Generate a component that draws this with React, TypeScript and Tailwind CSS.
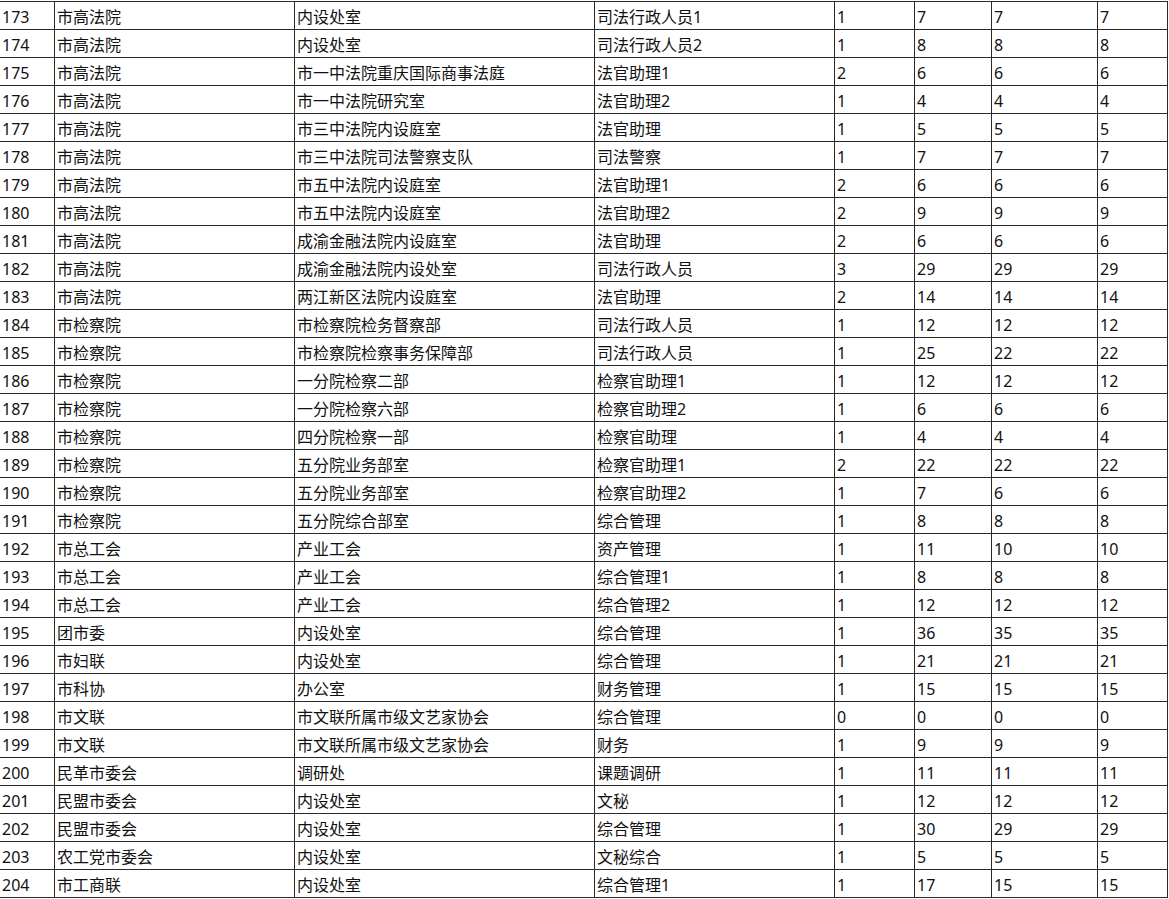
const rows: string[][] = [
  ['173', '市高法院', '内设处室', '司法行政人员1', '1', '7', '7', '7'],
  ['174', '市高法院', '内设处室', '司法行政人员2', '1', '8', '8', '8'],
  ['175', '市高法院', '市一中法院重庆国际商事法庭', '法官助理1', '2', '6', '6', '6'],
  ['176', '市高法院', '市一中法院研究室', '法官助理2', '1', '4', '4', '4'],
  ['177', '市高法院', '市三中法院内设庭室', '法官助理', '1', '5', '5', '5'],
  ['178', '市高法院', '市三中法院司法警察支队', '司法警察', '1', '7', '7', '7'],
  ['179', '市高法院', '市五中法院内设庭室', '法官助理1', '2', '6', '6', '6'],
  ['180', '市高法院', '市五中法院内设庭室', '法官助理2', '2', '9', '9', '9'],
  ['181', '市高法院', '成渝金融法院内设庭室', '法官助理', '2', '6', '6', '6'],
  ['182', '市高法院', '成渝金融法院内设处室', '司法行政人员', '3', '29', '29', '29'],
  ['183', '市高法院', '两江新区法院内设庭室', '法官助理', '2', '14', '14', '14'],
  ['184', '市检察院', '市检察院检务督察部', '司法行政人员', '1', '12', '12', '12'],
  ['185', '市检察院', '市检察院检察事务保障部', '司法行政人员', '1', '25', '22', '22'],
  ['186', '市检察院', '一分院检察二部', '检察官助理1', '1', '12', '12', '12'],
  ['187', '市检察院', '一分院检察六部', '检察官助理2', '1', '6', '6', '6'],
  ['188', '市检察院', '四分院检察一部', '检察官助理', '1', '4', '4', '4'],
  ['189', '市检察院', '五分院业务部室', '检察官助理1', '2', '22', '22', '22'],
  ['190', '市检察院', '五分院业务部室', '检察官助理2', '1', '7', '6', '6'],
  ['191', '市检察院', '五分院综合部室', '综合管理', '1', '8', '8', '8'],
  ['192', '市总工会', '产业工会', '资产管理', '1', '11', '10', '10'],
  ['193', '市总工会', '产业工会', '综合管理1', '1', '8', '8', '8'],
  ['194', '市总工会', '产业工会', '综合管理2', '1', '12', '12', '12'],
  ['195', '团市委', '内设处室', '综合管理', '1', '36', '35', '35'],
  ['196', '市妇联', '内设处室', '综合管理', '1', '21', '21', '21'],
  ['197', '市科协', '办公室', '财务管理', '1', '15', '15', '15'],
  ['198', '市文联', '市文联所属市级文艺家协会', '综合管理', '0', '0', '0', '0'],
  ['199', '市文联', '市文联所属市级文艺家协会', '财务', '1', '9', '9', '9'],
  ['200', '民革市委会', '调研处', '课题调研', '1', '11', '11', '11'],
  ['201', '民盟市委会', '内设处室', '文秘', '1', '12', '12', '12'],
  ['202', '民盟市委会', '内设处室', '综合管理', '1', '30', '29', '29'],
  ['203', '农工党市委会', '内设处室', '文秘综合', '1', '5', '5', '5'],
  ['204', '市工商联', '内设处室', '综合管理1', '1', '17', '15', '15'],
];

// column widths include the 1px right border
const widths = ['w-[55px]', 'w-[240px]', 'w-[300px]', 'w-[240px]', 'w-[80px]', 'w-[77px]', 'w-[106px]', 'w-[70px]'];

export default function App() {
  return (
    <div
      className="h-[899px] w-[1169px] overflow-hidden bg-white pt-px text-[16px] text-[#111]"
      style={{ fontFamily: '"Noto Sans", "Noto Sans CJK SC", sans-serif' }}
    >
      <div className="w-fit border-t border-[#2a2a2a]">
        {rows.map((row) => (
          <div key={row[0]} className="flex h-[28px] border-b border-[#2a2a2a]">
            {row.map((cell, i) => (
              <div
                key={i}
                className={`${widths[i]} flex shrink-0 items-center overflow-hidden whitespace-nowrap pl-[2px] pt-[2px] leading-none ${
                  i === 0 ? 'border-r border-[#2a2a2a]' : 'border-r border-[#2a2a2a]'
                }`}
              >
                {cell}
              </div>
            ))}
          </div>
        ))}
      </div>
    </div>
  );
}
